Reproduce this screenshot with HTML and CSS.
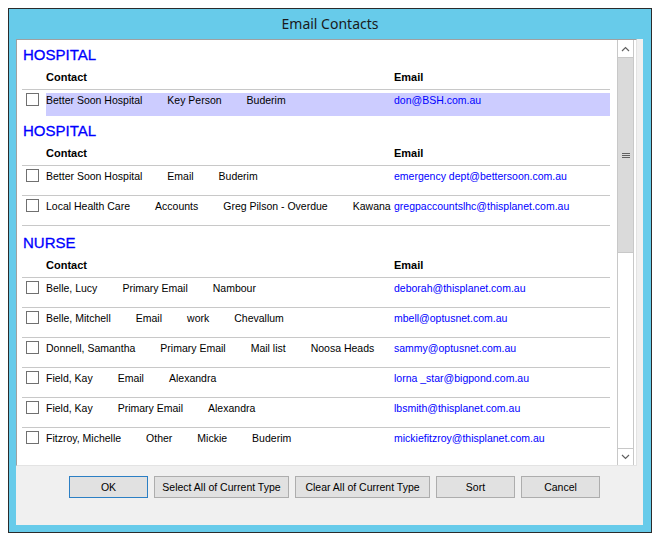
FILE: index.html
```html
<!DOCTYPE html>
<html lang="en">
<head>
  <meta charset="UTF-8">
  <title>Email Contacts</title>
  <link rel="stylesheet" href="styles.css">
</head>
<body>
  <div class="window">
    <div class="titlebar">Email Contacts</div>

    <div class="client">
      <!-- List of contacts, grouped by type -->
      <div class="listbox">
        <div class="list">
          <div class="group">
            <div class="title near">HOSPITAL</div>
            <div class="head"><span class="col-fields">Contact</span><span>Email</span></div>
            <div class="row selected">
              <span class="check"></span>
              <div class="cells">
                <div class="fields"><span>Better Soon Hospital</span><span>Key Person</span><span>Buderim</span></div>
                <span class="email">don@BSH.com.au</span>
              </div>
            </div>
          </div>

          <div class="group">
            <div class="title near">HOSPITAL</div>
            <div class="head"><span class="col-fields">Contact</span><span>Email</span></div>
            <div class="row">
              <span class="check"></span>
              <div class="cells">
                <div class="fields"><span>Better Soon Hospital</span><span>Email</span><span>Buderim</span></div>
                <span class="email">emergency dept@bettersoon.com.au</span>
              </div>
            </div>
            <div class="row">
              <span class="check"></span>
              <div class="cells">
                <div class="fields"><span>Local Health Care</span><span>Accounts</span><span>Greg Pilson - Overdue</span><span>Kawana</span></div>
                <span class="email">gregpaccountslhc@thisplanet.com.au</span>
              </div>
            </div>
          </div>

          <div class="group">
            <div class="title">NURSE</div>
            <div class="head"><span class="col-fields">Contact</span><span>Email</span></div>
            <div class="row">
              <span class="check"></span>
              <div class="cells">
                <div class="fields"><span>Belle, Lucy</span><span>Primary Email</span><span>Nambour</span></div>
                <span class="email">deborah@thisplanet.com.au</span>
              </div>
            </div>
            <div class="row">
              <span class="check"></span>
              <div class="cells">
                <div class="fields"><span>Belle, Mitchell</span><span>Email</span><span>work</span><span>Chevallum</span></div>
                <span class="email">mbell@optusnet.com.au</span>
              </div>
            </div>
            <div class="row">
              <span class="check"></span>
              <div class="cells">
                <div class="fields"><span>Donnell, Samantha</span><span>Primary Email</span><span>Mail list</span><span>Noosa Heads</span></div>
                <span class="email">sammy@optusnet.com.au</span>
              </div>
            </div>
            <div class="row">
              <span class="check"></span>
              <div class="cells">
                <div class="fields"><span>Field, Kay</span><span>Email</span><span>Alexandra</span></div>
                <span class="email">lorna _star@bigpond.com.au</span>
              </div>
            </div>
            <div class="row">
              <span class="check"></span>
              <div class="cells">
                <div class="fields"><span>Field, Kay</span><span>Primary Email</span><span>Alexandra</span></div>
                <span class="email">lbsmith@thisplanet.com.au</span>
              </div>
            </div>
            <div class="row last">
              <span class="check"></span>
              <div class="cells">
                <div class="fields"><span>Fitzroy, Michelle</span><span>Other</span><span>Mickie</span><span>Buderim</span></div>
                <span class="email">mickiefitzroy@thisplanet.com.au</span>
              </div>
            </div>
          </div>
        </div>

        <!-- Vertical scrollbar -->
        <div class="scrollbar">
          <div class="arrow">
            <svg width="9" height="6" viewBox="0 0 9 6"><polyline points="1,5 4.5,1.5 8,5" fill="none" stroke="#606060" stroke-width="1.2"/></svg>
          </div>
          <div class="thumb">
            <svg width="8" height="7" viewBox="0 0 8 7"><path d="M0 1.5h8M0 3.5h8M0 5.5h8" stroke="#606060" stroke-width="1"/></svg>
          </div>
          <div class="track"></div>
          <div class="arrow down">
            <svg width="9" height="6" viewBox="0 0 9 6"><polyline points="1,1 4.5,4.5 8,1" fill="none" stroke="#606060" stroke-width="1.2"/></svg>
          </div>
        </div>
      </div>

      <div class="buttons">
        <button class="btn default">OK</button>
        <button class="btn wide">Select All of Current Type</button>
        <button class="btn wide">Clear All of Current Type</button>
        <button class="btn">Sort</button>
        <button class="btn">Cancel</button>
      </div>
    </div>
  </div>
</body>
</html>
```

FILE: styles.css
```css
* {
  box-sizing: border-box;
  margin: 0;
  padding: 0;
}

body {
  background: #ffffff;
  font-family: "Liberation Sans", Arial, sans-serif;
  font-size: 11px;
  color: #000;
}

/* Window frame */
.window {
  margin: 8px;
  width: 644px;
  height: 525px;
  border: 1px solid #2b2b2b;
  background: #67cbea;
  padding: 0 7px 7px 7px;
}

.titlebar {
  height: 30px;
  line-height: 29px;
  text-align: center;
  font-family: "Noto Sans", "Open Sans", sans-serif;
  font-size: 14px;
  color: #1a1a1a;
}

.client {
  width: 627px;
  height: 486px;
  background: #f0f0f0;
}

/* List box */
.listbox {
  width: 621px;
  height: 427px;
  display: flex;
  background: #fff;
  border-top: 1px solid #a0a0a0;
  border-left: 1px solid #a0a0a0;
  border-right: 1px solid #e3e3e3;
  border-bottom: 1px solid #e3e3e3;
}

.list {
  width: 600px;
  height: 425px;
  overflow: hidden;
  padding: 0 7px 0 5px;
}

.title {
  padding: 6px 0 0 1px;
  line-height: 22px;
  font-size: 15px;
  color: #0000ff;
  -webkit-text-stroke: 0.3px #0000ff;
}

.title.near {
  padding-top: 4px;
}

.head {
  display: flex;
  height: 24px;
  line-height: 23px;
  padding-left: 24px;
  font-weight: bold;
  border-bottom: 1px solid #c8c8c8;
}

.col-fields {
  width: 348px;
}

.row {
  display: flex;
  align-items: flex-start;
  padding: 3px 0;
  border-bottom: 1px solid #c8c8c8;
}

.row.selected {
  padding-bottom: 0;
  border-bottom: 0;
}

.row.last {
  border-bottom: 0;
}

.row.selected .cells {
  background: #ccccff;
}

.check {
  width: 13px;
  height: 13px;
  flex: none;
  border: 1px solid #707070;
  background: #fff;
  margin: 0 7px 0 4px;
}

.cells {
  flex: 1;
  display: flex;
  height: 23px;
  padding-top: 1px;
  line-height: 13px;
  font-size: 10.5px;
  white-space: nowrap;
}

.fields {
  width: 348px;
  flex: none;
  display: flex;
  gap: 25px;
}

.email {
  color: #0000ff;
}

/* Scrollbar */
.scrollbar {
  width: 17px;
  height: 425px;
  display: flex;
  flex-direction: column;
  border-left: 1px solid #c8c8c8;
  border-right: 1px solid #c8c8c8;
  margin-right: 2px;
}

.arrow {
  height: 18px;
  display: flex;
  align-items: center;
  justify-content: center;
  background: #fff;
  border-bottom: 1px solid #c8c8c8;
}

.arrow.down {
  border-bottom: 0;
  border-top: 1px solid #c8c8c8;
  height: 17px;
}

.thumb {
  height: 195px;
  background: #dadada;
  border-bottom: 1px solid #c8c8c8;
  display: flex;
  align-items: center;
  justify-content: center;
}

.track {
  flex: 1;
  background: #fff;
}

/* Buttons */
.buttons {
  display: flex;
  gap: 6px;
  padding: 10px 0 0 53px;
}

.btn {
  height: 22px;
  width: 79px;
  background: #e1e1e1;
  border: 1px solid #adadad;
  font-family: "Liberation Sans", Arial, sans-serif;
  font-size: 10.5px;
  color: #000;
}

.btn.wide {
  width: 135px;
}

.btn.default {
  border-color: #2c7fc4;
}
```
